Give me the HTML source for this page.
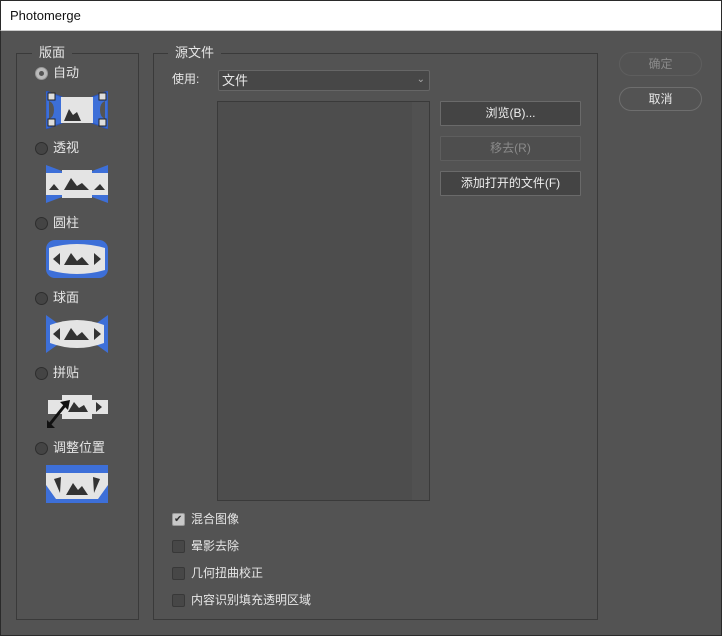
<!DOCTYPE html>
<html><head><meta charset="utf-8"><style>
*{margin:0;padding:0;box-sizing:border-box}
body{width:722px;height:636px;background:#535353;font-family:"Liberation Sans","Noto Sans CJK SC",sans-serif;color:#e6e6e6;font-size:12px;line-height:16px;position:relative;overflow:hidden}
.a{position:absolute}
.title{left:0;top:0;width:722px;height:31px;background:#fff;color:#111;font-size:13px;padding:7px 0 0 9px;border:1px solid #2a2a2a;border-bottom:1px solid #ccc}
.grp{border:1px solid #3a3a3a}
.lg{background:#535353;padding:0 7px;font-size:13px;color:#e6e6e6}
.radio{width:13px;height:13px;border-radius:50%;border:1px solid #2e2e2e;background:#444}
.btn{border:1px solid #6a6a6a;background:#444;border-radius:1px;text-align:center;font-size:12px;line-height:23px;color:#eee}
.rb{border:1px solid #6e6e6e;border-radius:12px;text-align:center;line-height:22px;font-size:12px}
.cb{width:13px;height:13px;border:1px solid #383838;background:#474747;border-radius:2px}
</style></head><body>
<div class="a title">Photomerge</div>
<div class="a" style="left:0;top:31px;width:1px;height:605px;background:#2a2a2a"></div>
<div class="a" style="left:721px;top:31px;width:1px;height:605px;background:#2a2a2a"></div>
<div class="a" style="left:0;top:635px;width:722px;height:1px;background:#2a2a2a"></div>

<div class="a grp" style="left:16px;top:53px;width:123px;height:567px"></div>
<div class="a lg" style="left:32px;top:45px">版面</div>
<div class="a grp" style="left:153px;top:53px;width:445px;height:567px"></div>
<div class="a lg" style="left:168px;top:45px">源文件</div>

<div class="a radio" style="left:35px;top:67px;background:#bbb;border-color:#999"><div style="position:absolute;left:3px;top:3px;width:5px;height:5px;border-radius:50%;background:#555"></div></div>
<div class="a" style="left:53px;top:65px;font-size:13px">自动</div>
<div class="a radio" style="left:35px;top:142px"></div><div class="a" style="left:53px;top:140px;font-size:13px">透视</div>
<div class="a radio" style="left:35px;top:217px"></div><div class="a" style="left:53px;top:215px;font-size:13px">圆柱</div>
<div class="a radio" style="left:35px;top:292px"></div><div class="a" style="left:53px;top:290px;font-size:13px">球面</div>
<div class="a radio" style="left:35px;top:367px"></div><div class="a" style="left:53px;top:365px;font-size:13px">拼贴</div>
<div class="a radio" style="left:35px;top:442px"></div><div class="a" style="left:53px;top:440px;font-size:13px">调整位置</div>

<svg class="a" style="left:46px;top:91px" width="62" height="38" viewBox="0 0 62 38">
<path d="M0 0L16 6V32L0 38Z M62 0L46 6V32L62 38Z" fill="#3d6fd8" stroke="#2a55c0"/>
<path d="M3 10Q8 12 8 19Q8 26 3 28Z M59 10Q54 12 54 19Q54 26 59 28Z" fill="#555"/>
<rect x="15" y="6" width="32" height="26" fill="#e4e4e4"/>
<path d="M18 30L23 18L27 24L31 21L35 30Z" fill="#333"/>
<g fill="#ddd" stroke="#222"><rect x="2" y="2" width="7" height="7"/><rect x="53" y="2" width="7" height="7"/><rect x="2" y="28" width="7" height="7"/><rect x="53" y="28" width="7" height="7"/></g>
</svg>
<svg class="a" style="left:46px;top:165px" width="62" height="38" viewBox="0 0 62 38">
<path d="M0 0L16 6V32L0 38Z M62 0L46 6V32L62 38Z" fill="#3d6fd8"/>
<rect x="0" y="8" width="62" height="22" fill="#e4e4e4"/><rect x="16" y="5" width="30" height="28" fill="#e4e4e4"/>
<path d="M3 25L8 19L13 25Z M18 25L25 13L31 21L36 18L43 25Z M48 25L54 19L59 25Z" fill="#333"/>
</svg>
<svg class="a" style="left:46px;top:240px" width="62" height="38" viewBox="0 0 62 38">
<rect x="0" y="0" width="62" height="38" rx="9" fill="#3d6fd8"/>
<path d="M3 8Q31 0 59 8V30Q31 38 3 30Z" fill="#e4e4e4"/>
<path d="M7 19L14 13V25Z M55 19L48 13V25Z M18 25L25 13L31 21L36 17L43 25Z" fill="#333"/>
</svg>
<svg class="a" style="left:46px;top:315px" width="62" height="38" viewBox="0 0 62 38">
<path d="M0 0L14 10V28L0 38Z M62 0L48 10V28L62 38Z" fill="#3d6fd8"/>
<path d="M4 10Q31 0 58 10V28Q31 38 4 28Z" fill="#e4e4e4"/>
<path d="M7 19L14 13V25Z M55 19L48 13V25Z M18 25L25 13L31 21L36 17L43 25Z" fill="#333"/>
</svg>
<svg class="a" style="left:46px;top:390px" width="62" height="38" viewBox="0 0 62 38">
<path d="M2 10H16V5H46V10H62V24H46V29H16V24H2Z" fill="#e4e4e4"/>
<path d="M22 22L28 12L33 18L38 15L42 22Z M50 22L56 17L50 12Z" fill="#333"/>
<path d="M4 34L20 14" stroke="#111" stroke-width="3"/><path d="M1 38V30L9 38Z M24 10L14 12L22 20Z" fill="#111"/>
</svg>
<svg class="a" style="left:46px;top:465px" width="62" height="38" viewBox="0 0 62 38">
<rect width="62" height="38" fill="#3d6fd8"/>
<path d="M0 8H28V0H34V8H62V20L52 34H10L0 20Z" fill="#e4e4e4"/>
<rect x="28" y="0" width="6" height="8" fill="#3d6fd8"/>
<path d="M8 14L14 28L15 12Z M54 14L48 28L47 12Z M20 30L27 18L32 25L36 21L42 30Z" fill="#333"/>
</svg>

<div class="a" style="left:172px;top:71px">使用:</div>
<div class="a" style="left:218px;top:70px;width:212px;height:21px;border:1px solid #666;background:#474747;border-radius:2px;padding:2px 0 0 3px;font-size:13px">文件<span style="position:absolute;right:4px;top:1px;font-size:10px;color:#aaa">⌄</span></div>
<div class="a" style="left:217px;top:101px;width:213px;height:400px;border:1px solid #3a3a3a;background:#4d4d4d"><div style="position:absolute;right:0;top:0;width:17px;height:100%;background:#515151"></div></div>

<div class="a btn" style="left:440px;top:101px;width:141px;height:25px">浏览(B)...</div>
<div class="a btn" style="left:440px;top:136px;width:141px;height:25px;background:#4e4e4e;border-color:#5e5e5e;color:#8a8a8a">移去(R)</div>
<div class="a btn" style="left:440px;top:171px;width:141px;height:25px">添加打开的文件(F)</div>

<div class="a rb" style="left:619px;top:52px;width:83px;height:24px;border-color:#5e5e5e;color:#8a8a8a">确定</div>
<div class="a rb" style="left:619px;top:87px;width:83px;height:24px">取消</div>

<div class="a cb" style="left:172px;top:513px;background:#c8c8c8;border-color:#999"><span style="position:absolute;left:1px;top:-2px;font-size:10px;color:#333">✔</span></div>
<div class="a" style="left:191px;top:511px">混合图像</div>
<div class="a cb" style="left:172px;top:540px"></div><div class="a" style="left:191px;top:538px">晕影去除</div>
<div class="a cb" style="left:172px;top:567px"></div><div class="a" style="left:191px;top:565px">几何扭曲校正</div>
<div class="a cb" style="left:172px;top:594px"></div><div class="a" style="left:191px;top:592px">内容识别填充透明区域</div>
</body></html>
